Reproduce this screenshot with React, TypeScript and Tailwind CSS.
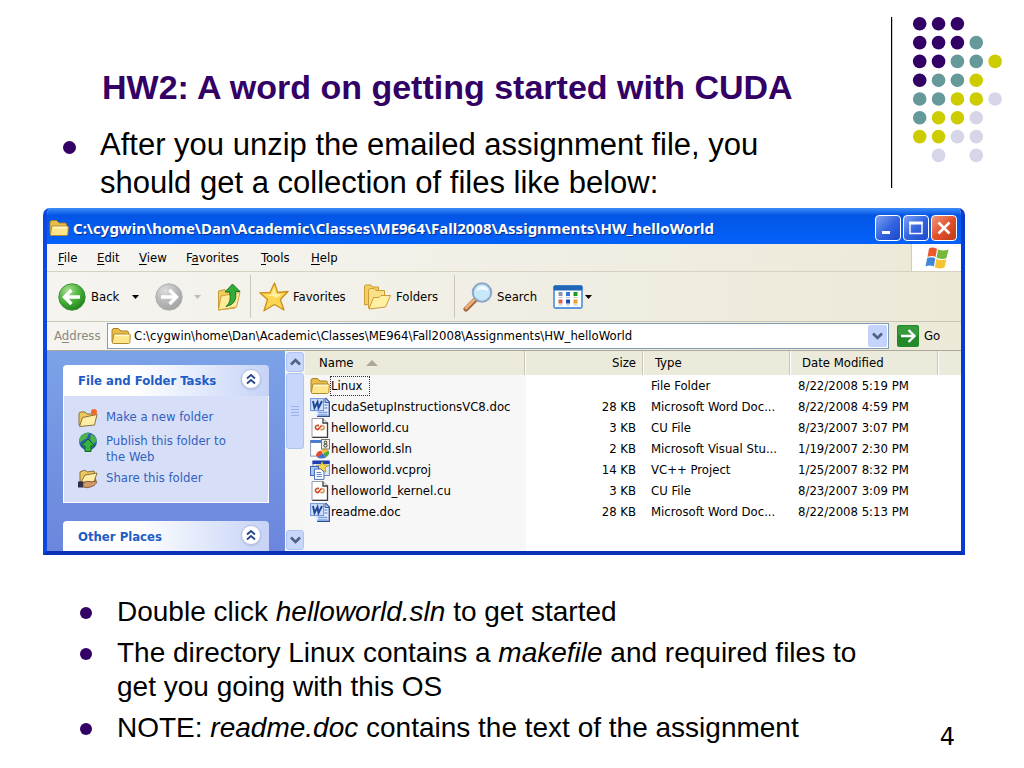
import React from "react";

const tahoma = "font-['DejaVu_Sans_Condensed','DejaVu_Sans',sans-serif]";

const dotColors: Record<string, string> = {
  p: "#330066",
  t: "#669999",
  y: "#cccc00",
  l: "#d6d6e8",
};

const dotRows = ["ppp", "pppt", "pptty", "ptty", "ttyyl", "tyyl", "yyll", " l l"];

function DotPattern() {
  return (
    <svg className="mt-4 h-[172px] w-[116px] shrink-0" viewBox="0 0 116 172" aria-hidden="true">
      <rect x="1" y="1" width="1.2" height="171" fill="#000" />
      {dotRows.map((row, r) =>
        row.split("").map((c, i) =>
          c === " " ? null : (
            <circle key={`${r}-${i}`} cx={29.7 + i * 18.85} cy={7.8 + r * 18.8} r="6.8" fill={dotColors[c]} />
          ),
        ),
      )}
    </svg>
  );
}

function Folder({ className }: { className: string }) {
  return (
    <svg className={className} viewBox="0 0 20 18" aria-hidden="true">
      <path d="M1 15V3.5Q1 1.5 3 1.5H7.5L10 4H16Q17.5 4 17.5 5.5V15Z" fill="#e9bd48" stroke="#a9822b" />
      <path d="M2.2 16.5Q1.2 16.5 1.5 15L2.6 8Q3 7 4 7H18Q19.4 7 19.3 8.2L18.8 15.4Q18.5 16.5 17.4 16.5Z" fill="#ffe68c" stroke="#b08a30" />
      <path d="M4 8.5H18" stroke="#fff8d0" strokeWidth="1.4" />
    </svg>
  );
}

function WordIcon() {
  return (
    <svg className="size-5 shrink-0" viewBox="0 0 20 20" aria-hidden="true">
      <path d="M6 1H15.5L19.3 5V19.3H6Z" fill="#e4edfd" />
      <path d="M15.5 1L19.3 5V19.3H7" fill="none" stroke="#2c4c93" strokeWidth="1.3" />
      <path d="M15 1V5.5H19" fill="#a9c3f3" stroke="#3a5fae" />
      <path d="M14.5 8H17.5M14.5 11H17.5M8 15.5H17.500M8 18H17.500" stroke="#7ba0e4" strokeWidth="1.500" />
      <rect x="0.600" y="1.600" width="13" height="12" fill="#cfdffa" stroke="#6e93d8" />
      <path d="M3 4L4.500 11L7.500 5L8.500 11L12 4" fill="none" stroke="#1f4599" strokeWidth="1.900" />
    </svg>
  );
}

function CuIcon() {
  return (
    <svg className="size-5 shrink-0" viewBox="0 0 20 20" aria-hidden="true">
      <path d="M2 0.500H13L17.500 5V19.300H2Z" fill="#fff" stroke="#9a9ea3" />
      <path d="M13 0.500V5H17.500V19.300H2.500" fill="none" stroke="#3a3f45" strokeWidth="1.300" />
      <path d="M9 7.500Q5 7 5.500 10Q6.500 12.500 9 11" fill="none" stroke="#c4562c" strokeWidth="1.800" />
      <path d="M8 11.500L11.500 7.500" stroke="#d83c20" strokeWidth="1.500" />
      <path d="M11 7.500Q15 7.500 14 10.500Q12.500 12.500 10.500 11" fill="none" stroke="#dd9a4c" strokeWidth="1.600" />
    </svg>
  );
}

function SlnIcon() {
  return (
    <svg className="size-5 shrink-0" viewBox="0 0 20 20" aria-hidden="true">
      <rect x="0.600" y="1.600" width="14" height="15.500" fill="#fff" stroke="#8d9bb8" />
      <rect x="0.500" y="1" width="12" height="3" fill="#4a7ed3" />
      <path d="M6 17Q6 12.500 11 11.500L13 15L10 19Z" fill="#e24a2e" />
      <path d="M11 11.500Q15 8 18.500 11.500L14 15Z" fill="#f5bd32" />
      <path d="M18.500 11.500Q20.500 16 16 18.500L13 15Z" fill="#4aa84a" />
      <path d="M7 18.500L13 14.500L16 18.500Q12 20.500 7 18.500Z" fill="#4374d4" />
      <rect x="11.500" y="0.500" width="8" height="9.500" fill="#f6f0e1" stroke="#7d7565" />
      <circle cx="15.500" cy="3.400" r="1.300" fill="none" stroke="#333" />
      <circle cx="15.500" cy="6.600" r="1.600" fill="none" stroke="#333" />
    </svg>
  );
}

function ProjectIcon() {
  return (
    <svg className="size-5 shrink-0" viewBox="0 0 20 20" aria-hidden="true">
      <rect x="3" y="1.500" width="16.400" height="14" fill="#dfe9fb" stroke="#6d89bf" />
      <rect x="2.500" y="0.500" width="17" height="3.500" fill="#1d3fb4" />
      <path d="M12 1.500L13.500 4.500L19 5.500L15 7.500L16 12L12 10L9 11.500L9.500 8L6 5.500L10.500 5Z" fill="#f8d84b" stroke="#a88c25" strokeWidth="0.700" />
      <rect x="0.500" y="6.500" width="8" height="9" fill="#a9c5f2" stroke="#3f66b0" />
      <path d="M4.500 9H11L14 12V19.400H4.500Z" fill="#fff" stroke="#4c70b7" />
      <path d="M6.500 12.500H11M6.500 14.500H12M6.500 16.500H12" stroke="#5b86d1" />
    </svg>
  );
}

function BackIcon({ forward = false }: { forward?: boolean }) {
  const id = forward ? "fwd-fill" : "back-fill";
  return (
    <svg className="size-7 shrink-0" viewBox="0 0 28 28" aria-hidden="true">
      <defs>
        <radialGradient id={id} cx="35%" cy="25%" r="80%">
          <stop offset="0" stopColor={forward ? "#dcdcdc" : "#a5df8c"} />
          <stop offset="0.600" stopColor={forward ? "#b5b5b5" : "#43ac36"} />
          <stop offset="1" stopColor={forward ? "#a2a2a2" : "#1f7f1c"} />
        </radialGradient>
      </defs>
      <circle cx="14" cy="14" r="13.200" fill={`url(#${id})`} stroke={forward ? "#b0b0b0" : "#3c9337"} />
      <path
        d={forward ? "M6 14H21M14.500 7L21.500 14L14.500 21" : "M22 14H7M13.500 7L6.500 14L13.500 21"}
        fill="none"
        stroke="#fff"
        strokeWidth="3.400"
      />
    </svg>
  );
}

function UpIcon() {
  return (
    <svg className="h-7 w-6 shrink-0" viewBox="0 0 24 28" aria-hidden="true">
      <path d="M1.500 8L8 6.500L10 9H18V25L1.500 27Z" fill="#f1cc60" stroke="#c79a35" />
      <path d="M1.500 27L4 13L23 9.500L19.500 24Z" fill="#ffeb9a" stroke="#cda23c" />
      <path d="M9 23.500Q15 19 12.500 9H8L15.500 1L23 8.500H18.500Q21 21 9 23.500Z" fill="#35a93a" stroke="#197a22" />
    </svg>
  );
}

function StarIcon() {
  return (
    <svg className="size-[30px] shrink-0" viewBox="0 0 30 30" aria-hidden="true">
      <path d="M15.500 1L18.800 10.500L29 9.500L21.300 17.500L25 28L15.500 22.500L5 28.800L8.500 17.500L0.800 10.800L11 10.500Z" fill="#ffd653" stroke="#c98f1d" strokeWidth="1.300" strokeLinejoin="round" />
      <path d="M15 5L16.800 12H23L17 16L14 14L8 14L13 12Z" fill="#fff0a8" />
    </svg>
  );
}

function FoldersIcon() {
  return (
    <svg className="h-[26px] w-7 shrink-0" viewBox="0 0 28 26" aria-hidden="true">
      <path d="M1.500 21V3Q1.500 1 3 1H8L10 3H15.500V19Z" fill="#f3cd63" stroke="#cb9b35" />
      <path d="M5.500 24V7Q5.500 4.500 7.500 4.500H11L13 6.500H21.500V22Z" fill="#fbe08a" stroke="#cb9b35" />
      <path d="M6 25L10.500 13.500H16L18 11.500H27.500L22.500 23Z" fill="#fff0a3" stroke="#cb9b35" />
    </svg>
  );
}

function SearchIcon() {
  return (
    <svg className="size-[30px] shrink-0" viewBox="0 0 30 30" aria-hidden="true">
      <path d="M3 27L12 18" stroke="#a2623c" strokeWidth="5" strokeLinecap="round" />
      <path d="M3 26L11.500 17.500" stroke="#edae7e" strokeWidth="3" strokeLinecap="round" />
      <circle cx="19" cy="10.500" r="9.200" fill="#c7e8fb" stroke="#8ea5c8" strokeWidth="2" />
      <path d="M13 9Q15 3.500 20 4Q25 5 25 9Q18 6 13 9Z" fill="#f4fbff" />
    </svg>
  );
}

function ViewsIcon() {
  const cells = ["#8d96ac", "#3479cf", "#199a21", "#df6149", "#214ca9", "#e6a32a"];
  return (
    <svg className="h-6 w-[30px] shrink-0" viewBox="0 0 30 24" aria-hidden="true">
      <rect x="1" y="1" width="28" height="22" rx="1.500" fill="#fff" stroke="#5d98da" strokeWidth="1.800" />
      <rect x="0.500" y="0.500" width="29" height="5" rx="1.500" fill="#2266b8" />
      {cells.map((c, i) => (
        <g key={c}>
          <rect x={5.5 + (i % 3) * 7.5} y={i < 3 ? 7 : 14.5} width="4" height="4" fill={c} />
          <rect x={5.5 + (i % 3) * 7.5} y={i < 3 ? 12 : 19.5} width="4" height="1" fill="#b9c0cc" />
        </g>
      ))}
    </svg>
  );
}

function WindowsFlag() {
  return (
    <svg className="h-[22px] w-6" viewBox="0 0 24 22" aria-hidden="true">
      <path d="M4 1.500Q8 -0.500 12 2L10.500 10Q7 8 2.500 10Z" fill="#ec5a2c" />
      <path d="M13 2.500Q18 4.500 23.500 2.500L21.500 11Q17 13 11.500 10.800Z" fill="#72b93c" />
      <path d="M2.200 11Q6 9.500 10.300 11.200L8.800 19.500Q5 17.500 0.500 19.500Z" fill="#4187d8" />
      <path d="M11.300 12Q16 14 21.300 12.200L19.500 20.500Q15 22.500 9.800 20.200Z" fill="#f6c332" />
    </svg>
  );
}

function Caret({ className }: { className: string }) {
  return (
    <svg className={`h-1 w-[7px] shrink-0 ${className}`} viewBox="0 0 7 4" aria-hidden="true">
      <path d="M0 0H7L3.500 4Z" fill="currentColor" />
    </svg>
  );
}

function Chevron({ up = false }: { up?: boolean }) {
  return (
    <svg className="h-2 w-[11px]" viewBox="0 0 11 8" aria-hidden="true">
      <path d={up ? "M1 6.500L5.500 2L10 6.500" : "M1 1.500L5.500 6L10 1.500"} fill="none" stroke="#4d6185" strokeWidth="2.600" />
    </svg>
  );
}

function MenuItem({ before = "", hot, after, width }: { before?: string; hot: string; after: string; width: string }) {
  return (
    <button className={`${width} text-left`}>
      {before}
      <span className="underline underline-offset-2">{hot}</span>
      {after}
    </button>
  );
}

function CaptionButton({ label, red = false, children }: { label: string; red?: boolean; children: React.ReactNode }) {
  return (
    <button
      aria-label={label}
      className={`flex size-[26px] items-center justify-center rounded-[4px] border border-white bg-linear-to-br ${
        red ? "from-[#f0977a] via-[#e0512b] to-[#c03a17]" : "from-[#7fa0f0] via-[#3565e0] to-[#1b48c8]"
      }`}
    >
      <svg className="size-[18px]" viewBox="0 0 18 18" aria-hidden="true">
        {children}
      </svg>
    </button>
  );
}

function PanelHeader({ title }: { title: string }) {
  return (
    <h2 className="flex h-[31px] items-center justify-between rounded-t-[4px] bg-linear-to-r from-white from-35% to-[#c6d3f7] pr-2 pl-[15px] text-[13px] font-bold text-[#215dc6]">
      <span className="pt-px">{title}</span>
      <button aria-label={`Collapse ${title}`} className="mb-1 flex size-5 items-center justify-center rounded-full border border-[#b4c0e4] bg-white shadow-sm">
        <svg className="size-3" viewBox="0 0 12 12" aria-hidden="true">
          <path d="M2 5.500L6 2L10 5.500M2 10.500L6 7L10 10.500" fill="none" stroke="#27418c" strokeWidth="1.700" />
        </svg>
      </button>
    </h2>
  );
}

function Task({ icon, children }: { icon: React.ReactNode; children: React.ReactNode }) {
  return (
    <li>
      <a href="#" className="flex gap-2">
        <span className="flex size-5 shrink-0 items-center justify-center">{icon}</span>
        <span className="pt-px">{children}</span>
      </a>
    </li>
  );
}

const files = [
  { name: "Linux", size: "", type: "File Folder", date: "8/22/2008 5:19 PM", icon: <Folder className="size-5 shrink-0" /> },
  { name: "cudaSetupInstructionsVC8.doc", size: "28 KB", type: "Microsoft Word Doc...", date: "8/22/2008 4:59 PM", icon: <WordIcon /> },
  { name: "helloworld.cu", size: "3 KB", type: "CU File", date: "8/23/2007 3:07 PM", icon: <CuIcon /> },
  { name: "helloworld.sln", size: "2 KB", type: "Microsoft Visual Stu...", date: "1/19/2007 2:30 PM", icon: <SlnIcon /> },
  { name: "helloworld.vcproj", size: "14 KB", type: "VC++ Project", date: "1/25/2007 8:32 PM", icon: <ProjectIcon /> },
  { name: "helloworld_kernel.cu", size: "3 KB", type: "CU File", date: "8/23/2007 3:09 PM", icon: <CuIcon /> },
  { name: "readme.doc", size: "28 KB", type: "Microsoft Word Doc...", date: "8/22/2008 5:13 PM", icon: <WordIcon /> },
];

function Sidebar() {
  return (
    <aside className="flex w-[238px] shrink-0 flex-col gap-[18px] overflow-hidden bg-linear-to-b from-[#7ba2e7] to-[#6c86dd] px-4 pt-[14px]">
      <section>
        <PanelHeader title="File and Folder Tasks" />
        <ul className="flex h-[107px] flex-col gap-1 border border-t-0 border-white bg-[#d6dff7] pt-3 pl-[14px] text-[13px] leading-4 text-[#3360c0]">
          <Task
            icon={
              <svg className="size-5" viewBox="0 0 20 20" aria-hidden="true">
                <path d="M1 17V5.500Q1 4 3 4H7L9 6H16V16Z" fill="#edc75b" stroke="#8c7138" />
                <path d="M1.500 18.500L4.500 9.500L19 6.500L16.500 17Z" fill="#ffeeaa" stroke="#8c7138" />
                <circle cx="16" cy="4" r="3" fill="#ee6b2c" />
              </svg>
            }
          >
            Make a new folder
          </Task>
          <Task
            icon={
              <svg className="size-5" viewBox="0 0 20 20" aria-hidden="true">
                <circle cx="10" cy="9.500" r="9" fill="#2c5fae" />
                <path d="M3 4Q7 0 11 1L9 6L4 9L1.500 11Q0.500 7 3 4ZM13 2Q18 4 19 9L15 12L12 7Z" fill="#4cb24d" />
                <path d="M10 7L17 14H13V19.500H7V14H3Z" fill="#35b13d" stroke="#126322" />
              </svg>
            }
          >
            Publish this folder to
            <br />
            the Web
          </Task>
          <Task
            icon={
              <svg className="size-5" viewBox="0 0 20 20" aria-hidden="true">
                <path d="M2 13V3L7 1L9 3L16 2L18 12Z" fill="#edc75b" stroke="#8c7138" />
                <path d="M3 13L7 6L19 4L16 13Z" fill="#ffeeaa" stroke="#8c7138" />
                <path d="M5 14Q10 11 13 13L18 12Q20 14 15 17Q10 20 5 18Z" fill="#d29a68" stroke="#7b4c26" strokeWidth="0.800" />
                <rect x="0" y="12.500" width="5" height="6" fill="#302f43" />
              </svg>
            }
          >
            Share this folder
          </Task>
        </ul>
      </section>
      <section>
        <PanelHeader title="Other Places" />
      </section>
    </aside>
  );
}

function ScrollBar() {
  const knob = "flex w-[18px] items-center justify-center rounded-[3px] border border-[#afc3f3] bg-[#c8d6fb]";
  return (
    <div className="flex w-5 shrink-0 flex-col items-center bg-[#f5f5f1] py-px">
      <button aria-label="Scroll up" className={`${knob} h-5`}>
        <Chevron up />
      </button>
      <div className={`${knob} mt-px h-[76px]`}>
        <svg className="h-[11px] w-2" viewBox="0 0 8 11" aria-hidden="true">
          <path d="M0 0.500H8M0 3.500H8M0 6.500H8M0 9.500H8" stroke="#98b2ee" />
        </svg>
      </div>
      <button aria-label="Scroll down" className={`${knob} mt-auto h-5`}>
        <Chevron />
      </button>
    </div>
  );
}

function FileTable() {
  const th = "border-r border-[#c9c5b4] font-normal shadow-[1px_0_0_#fff]";
  return (
    <div className="flex min-w-0 grow flex-col bg-[linear-gradient(to_right,#f7f7f7_221px,#ffffff_221px)]">
      <table className="w-full table-fixed border-separate border-spacing-0 text-[13px] leading-4">
        <colgroup>
          <col className="w-[220px]" />
          <col className="w-[118px]" />
          <col className="w-[147px]" />
          <col className="w-[148px]" />
          <col />
        </colgroup>
        <thead className="bg-[#ebeadb]">
          <tr className="h-6">
            <th className={`${th} pl-[14px] text-left`}>
              <span className="flex items-center gap-3">
                Name
                <svg className="h-[6px] w-3" viewBox="0 0 12 6" aria-hidden="true">
                  <path d="M6 0L12 6H0Z" fill="#aca899" />
                </svg>
              </span>
            </th>
            <th className={`${th} pr-[6px] text-right`}>Size</th>
            <th className={`${th} pl-3 text-left`}>Type</th>
            <th className={`${th} pl-3 text-left`}>Date Modified</th>
            <td className="p-0" />
          </tr>
        </thead>
        <tbody>
          {files.map((f) => (
            <tr key={f.name} className="h-[21px]">
              <td className="p-0 pl-[5px]">
                <span className="flex h-[21px] items-center gap-px whitespace-nowrap">
                  {f.icon}
                  <span className={f.name === "Linux" ? "py-px pr-[6px] outline outline-dotted outline-[#333]" : ""}>{f.name}</span>
                </span>
              </td>
              <td className="p-0 pr-[7px] text-right">{f.size}</td>
              <td className="p-0 pl-2 whitespace-nowrap">{f.type}</td>
              <td className="p-0 pl-2 whitespace-nowrap">{f.date}</td>
              <td className="p-0" />
            </tr>
          ))}
        </tbody>
      </table>
    </div>
  );
}

function ExplorerWindow() {
  return (
    <section className={`mr-[59px] ml-[43px] overflow-hidden rounded-t-[7px] border-x-4 border-b-4 border-l-[#0a48e0] border-r-[#0a3bd0] border-b-[#0831b8] bg-[#ece9d8] text-[13px] text-black ${tahoma}`}>
      <header className="flex h-9 items-center bg-linear-to-b from-[#3c8cf8] via-[#0355e6] via-20% to-[#0462fa] pt-1 pr-1 pl-[2px]">
        <Folder className="h-[18px] w-5 shrink-0" />
        <h2 className="ml-1 grow font-['Noto_Sans','Open_Sans',sans-serif] text-[15px] font-bold whitespace-nowrap text-white [text-shadow:1px_1px_0_#0a2f8a]">
          C:\cygwin\home\Dan\Academic\Classes\ME964\Fall2008\Assignments\HW_helloWorld
        </h2>
        <div className="flex gap-[2px]">
          <CaptionButton label="Minimize">
            <rect x="3" y="12" width="8" height="3" fill="#fff" />
          </CaptionButton>
          <CaptionButton label="Maximize">
            <path d="M3 4H15V14.500H3Z" fill="none" stroke="#fff" strokeWidth="1.400" />
            <rect x="2.300" y="2.500" width="13.400" height="3" fill="#fff" />
          </CaptionButton>
          <CaptionButton label="Close" red>
            <path d="M3.500 3.500L14.500 14.500M14.500 3.500L3.500 14.500" stroke="#fff" strokeWidth="2.600" />
          </CaptionButton>
        </div>
      </header>

      <nav className="flex h-7 border-b border-[#d5d2c2] bg-linear-to-r from-[#f6f5f2] to-[#ece9d8]">
        <div className="flex grow items-center pl-[11px]">
          <MenuItem hot="F" after="ile" width="w-[39px]" />
          <MenuItem hot="E" after="dit" width="w-[42px]" />
          <MenuItem hot="V" after="iew" width="w-[47px]" />
          <MenuItem before="F" hot="a" after="vorites" width="w-[75px]" />
          <MenuItem hot="T" after="ools" width="w-[50px]" />
          <MenuItem hot="H" after="elp" width="w-[40px]" />
        </div>
        <div className="flex w-[50px] items-center justify-center border-l border-[#d0cdbd] bg-white">
          <WindowsFlag />
        </div>
      </nav>

      <div className="flex h-[50px] items-center border-b border-[#c9c6b5] bg-linear-to-r from-[#f5f4f0] to-[#ece9d8] pl-[11px]">
        <button className="flex items-center gap-[5px]">
          <BackIcon />
          <span className="w-9 text-left">Back</span>
          <Caret className="text-black" />
        </button>
        <button aria-label="Forward" className="ml-4 flex items-center gap-[11px]">
          <BackIcon forward />
          <Caret className="text-[#c0bdb0]" />
        </button>
        <button aria-label="Up" className="ml-4">
          <UpIcon />
        </button>
        <span className="ml-[9px] h-[43px] w-px bg-[#cbc8b8]" />
        <button className="ml-2 flex items-center gap-1">
          <StarIcon />
          <span className="w-[70px] text-left">Favorites</span>
        </button>
        <button className="flex items-center gap-[5px]">
          <FoldersIcon />
          <span className="w-[58px] text-left">Folders</span>
        </button>
        <span className="h-[43px] w-px bg-[#cbc8b8]" />
        <button className="ml-2 flex items-center gap-1">
          <SearchIcon />
          <span className="w-14 text-left">Search</span>
        </button>
        <button aria-label="Views" className="flex items-center gap-[2px]">
          <ViewsIcon />
          <Caret className="text-black" />
        </button>
      </div>

      <div className="flex h-7 items-center bg-linear-to-r from-[#f5f4f0] to-[#ece9d8] pl-[7px]">
        <label htmlFor="address" className="w-[53px] text-[#8a897f]">
          A<span className="underline underline-offset-2">d</span>dress
        </label>
        <div className="flex h-[26px] min-w-0 grow items-center border border-[#7f9db9] bg-white pr-px pl-[3px]">
          <Folder className="h-[18px] w-5 shrink-0" />
          <input
            id="address"
            className="ml-[3px] min-w-0 grow bg-transparent text-[13px] outline-none"
            defaultValue="C:\cygwin\home\Dan\Academic\Classes\ME964\Fall2008\Assignments\HW_helloWorld"
          />
          <button aria-label="Show addresses" className="flex h-[22px] w-[19px] items-center justify-center rounded-[2px] bg-[#c4d3fb]">
            <Chevron />
          </button>
        </div>
        <button className="ml-2 flex w-16 items-center gap-[5px]">
          <svg className="size-[22px]" viewBox="0 0 22 22" aria-hidden="true">
            <rect width="22" height="22" rx="2" fill="#23892b" />
            <rect x="1" y="1" width="20" height="10" rx="2" fill="#45a64a" opacity="0.600" />
            <path d="M4 11H17M11.500 5L17.500 11L11.500 17" fill="none" stroke="#fff" strokeWidth="2.400" />
          </svg>
          Go
        </button>
      </div>

      <div className="flex h-[201px] border-t border-[#aca899]">
        <Sidebar />
        <ScrollBar />
        <FileTable />
      </div>
    </section>
  );
}

function Note({ children }: { children: React.ReactNode }) {
  return (
    <li className="flex">
      <span className="mt-3 mr-[25px] size-3 shrink-0 rounded-full bg-[#330066]" />
      <span>{children}</span>
    </li>
  );
}

export default function App() {
  return (
    <main className="min-h-screen bg-white font-['Liberation_Sans',Arial,sans-serif] text-black">
      <div className="flex h-52 justify-between pr-[18px]">
        <div>
          <h1 className="mt-[66px] ml-[102px] text-[34px] leading-[42px] font-bold whitespace-nowrap text-[#330066]">
            HW2: A word on getting started with CUDA
          </h1>
          <ul className="mt-[18px] ml-[63px]">
            <li className="flex text-[31px] leading-[38px]">
              <span className="mt-[15px] mr-6 size-[13px] shrink-0 rounded-full bg-[#330066]" />
              <span className="max-w-[700px]">After you unzip the emailed assignment file, you should get a collection of files like below:</span>
            </li>
          </ul>
        </div>
        <DotPattern />
      </div>

      <ExplorerWindow />

      <div className="flex items-end justify-between pt-10 pr-[69px] pl-20">
        <ul className="flex max-w-[800px] flex-col gap-[7px] text-[28px] leading-[34px]">
          <Note>
            Double click <em>helloworld.sln</em> to get started
          </Note>
          <Note>
            The directory Linux contains a <em>makefile</em> and required files to
            <br />
            get you going with this OS
          </Note>
          <Note>
            NOTE: <em>readme.doc</em> contains the text of the assignment
          </Note>
        </ul>
        <span className="-mb-2 font-['DejaVu_Sans',sans-serif] text-[24px] leading-8">4</span>
      </div>
    </main>
  );
}
